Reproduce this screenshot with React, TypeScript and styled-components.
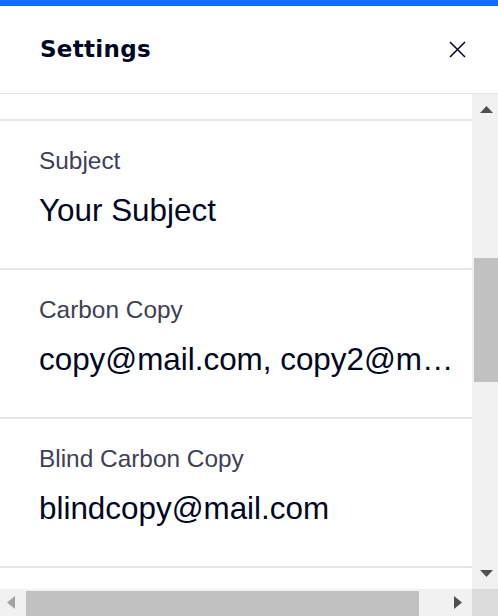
import { useEffect, useRef } from "react";
import styled, { createGlobalStyle } from "styled-components";

type Field = { label: string; value: string };

const fields: Field[] = [
  { label: "Sender Name", value: "Your Name" },
  { label: "Sender Email", value: "sender@mail.com" },
  { label: "Recipient", value: "recipient@mail.com" },
  { label: "Subject", value: "Your Subject" },
  { label: "Carbon Copy", value: "copy@mail.com, copy2@mail.com" },
  { label: "Blind Carbon Copy", value: "blindcopy@mail.com" },
  { label: "Reply To", value: "reply@mail.com" },
  { label: "Priority", value: "Normal" },
  { label: "Format", value: "HTML" },
  { label: "Signature", value: "Best regards" },
  { label: "Attachments", value: "None" },
];

// scroll geometry of the settings list
const VIEW_W = 472;
const VIEW_H = 495;
const CONTENT_W = 504;
const CONTENT_H = 130 + fields.length * 149;
const SCROLL_TOP = 550;
const V_TRACK = VIEW_H - 52;
const H_TRACK = VIEW_W - 52;
const vThumb = Math.round((V_TRACK * VIEW_H) / CONTENT_H);
const vOffset = Math.round((SCROLL_TOP / (CONTENT_H - VIEW_H)) * (V_TRACK - vThumb));
const hThumb = Math.round((H_TRACK * VIEW_W) / CONTENT_W);

function Arrow({ dir, color }: { dir: "up" | "down" | "left" | "right"; color: string }) {
  const d = {
    up: "M0 7 L6.5 0 L13 7Z",
    down: "M0 0 L13 0 L6.5 7Z",
    left: "M8 0 L8 13 L0 6.5Z",
    right: "M0 0 L8 6.5 L0 13Z",
  }[dir];
  const vertical = dir === "up" || dir === "down";
  return (
    <svg width={vertical ? 13 : 8} height={vertical ? 7 : 13}>
      <path d={d} fill={color} />
    </svg>
  );
}

function App() {
  const viewRef = useRef<HTMLDivElement>(null);

  useEffect(() => {
    if (viewRef.current) viewRef.current.scrollTop = SCROLL_TOP;
  }, []);

  return (
    <>
      <GlobalStyle />
      <Panel>
        <AccentBar />
        <Header>
          <Title>Settings</Title>
          <CloseButton aria-label="Close">
            <svg width="17" height="17" viewBox="0 0 17 17">
              <path d="M1 1 L16 16 M16 1 L1 16" stroke="#000624" strokeWidth="1.5" fill="none" />
            </svg>
          </CloseButton>
        </Header>
        <ScrollArea>
          <Viewport ref={viewRef}>
            <FieldList>
              {fields.map((f) => (
                <FieldRow key={f.label}>
                  <Label>{f.label}</Label>
                  <Value>{f.value}</Value>
                </FieldRow>
              ))}
            </FieldList>
          </Viewport>
          <VBar>
            <VButton $end="top">
              <Arrow dir="up" color="#505050" />
            </VButton>
            <VTrack>
              <VThumb $size={vThumb} $offset={vOffset} />
            </VTrack>
            <VButton $end="bottom">
              <Arrow dir="down" color="#505050" />
            </VButton>
          </VBar>
          <HBar>
            <HButton $pad={7}>
              <Arrow dir="left" color="#a3a3a3" />
            </HButton>
            <HTrack>
              <HThumb $size={hThumb} $offset={0} />
            </HTrack>
            <HButton $pad={8}>
              <Arrow dir="right" color="#505050" />
            </HButton>
          </HBar>
          <Corner />
        </ScrollArea>
      </Panel>
    </>
  );
}

const GlobalStyle = createGlobalStyle`
  html, body {
    margin: 0;
    height: 100%;
    overflow: hidden;
    background: #ffffff;
  }
  #root {
    height: 100%;
  }
`;

const Panel = styled.div`
  display: flex;
  flex-direction: column;
  height: 100vh;
  background-color: #ffffff;
`;

const AccentBar = styled.div`
  height: 6px;
  flex-shrink: 0;
  background-color: #116dff;
`;

const Header = styled.header`
  display: flex;
  justify-content: space-between;
  align-items: center;
  flex-shrink: 0;
  height: 88px;
  padding: 0 24px 0 40px;
  box-sizing: border-box;
  border-bottom: 1px solid #dfe5eb;
`;

const Title = styled.h1`
  margin: 0 0 2px;
  font-family: "DejaVu Sans", "Noto Sans", sans-serif;
  font-size: 23px;
  font-weight: 700;
  letter-spacing: 0.3px;
  color: #000624;
`;

const CloseButton = styled.button`
  display: flex;
  align-items: center;
  justify-content: center;
  width: 34px;
  height: 34px;
  padding: 0;
  border: none;
  background: none;
  cursor: pointer;
`;

const ScrollArea = styled.div`
  flex: 1;
  min-height: 0;
  display: grid;
  grid-template-columns: 1fr 26px;
  grid-template-rows: 1fr 27px;
`;

const Viewport = styled.div`
  overflow: hidden;
  min-height: 0;
`;

const VBar = styled.div`
  display: flex;
  flex-direction: column;
  background-color: #f1f1f1;
`;

const VButton = styled.div<{ $end: "top" | "bottom" }>`
  display: flex;
  justify-content: center;
  align-items: ${(p) => (p.$end === "top" ? "flex-end" : "flex-start")};
  height: 26px;
  padding-left: 2px;
  box-sizing: border-box;
  padding-bottom: ${(p) => (p.$end === "top" ? "7px" : "0")};
  padding-top: ${(p) => (p.$end === "bottom" ? "7px" : "0")};

  svg {
    display: block;
  }
`;

const VTrack = styled.div`
  flex: 1;
  display: flex;
  flex-direction: column;
  padding-left: 2px;
`;

const VThumb = styled.div<{ $size: number; $offset: number }>`
  height: ${(p) => p.$size}px;
  margin-top: ${(p) => p.$offset}px;
  background-color: #c1c1c1;
`;

const HBar = styled.div`
  display: flex;
  background-color: #f1f1f1;
`;

const HButton = styled.div<{ $pad: number }>`
  display: flex;
  align-items: center;
  width: 26px;
  padding-left: ${(p) => p.$pad}px;
  box-sizing: border-box;

  svg {
    display: block;
  }
`;

const HTrack = styled.div`
  flex: 1;
  display: flex;
  padding-top: 2px;
`;

const HThumb = styled.div<{ $size: number; $offset: number }>`
  width: ${(p) => p.$size}px;
  margin-left: ${(p) => p.$offset}px;
  background-color: #c1c1c1;
`;

const Corner = styled.div`
  background-color: #dcdcdc;
`;

const FieldList = styled.div`
  width: ${CONTENT_W}px;
  padding-top: 130px;
`;

const FieldRow = styled.section`
  display: flex;
  flex-direction: column;
  height: 149px;
  box-sizing: border-box;
  padding: 25px 40px 0 39px;
  border-bottom: 2px solid #e3e7ed;
`;

const Label = styled.div`
  font-family: "Liberation Sans", Arial, sans-serif;
  font-size: 24.4px;
  line-height: 30px;
  color: #3e4154;
`;

const Value = styled.div`
  margin-top: 15px;
  font-family: "Liberation Sans", Arial, sans-serif;
  font-size: 31.4px;
  line-height: 40px;
  color: #000624;
  white-space: nowrap;
  overflow: hidden;
  text-overflow: ellipsis;
`;

export default App;
